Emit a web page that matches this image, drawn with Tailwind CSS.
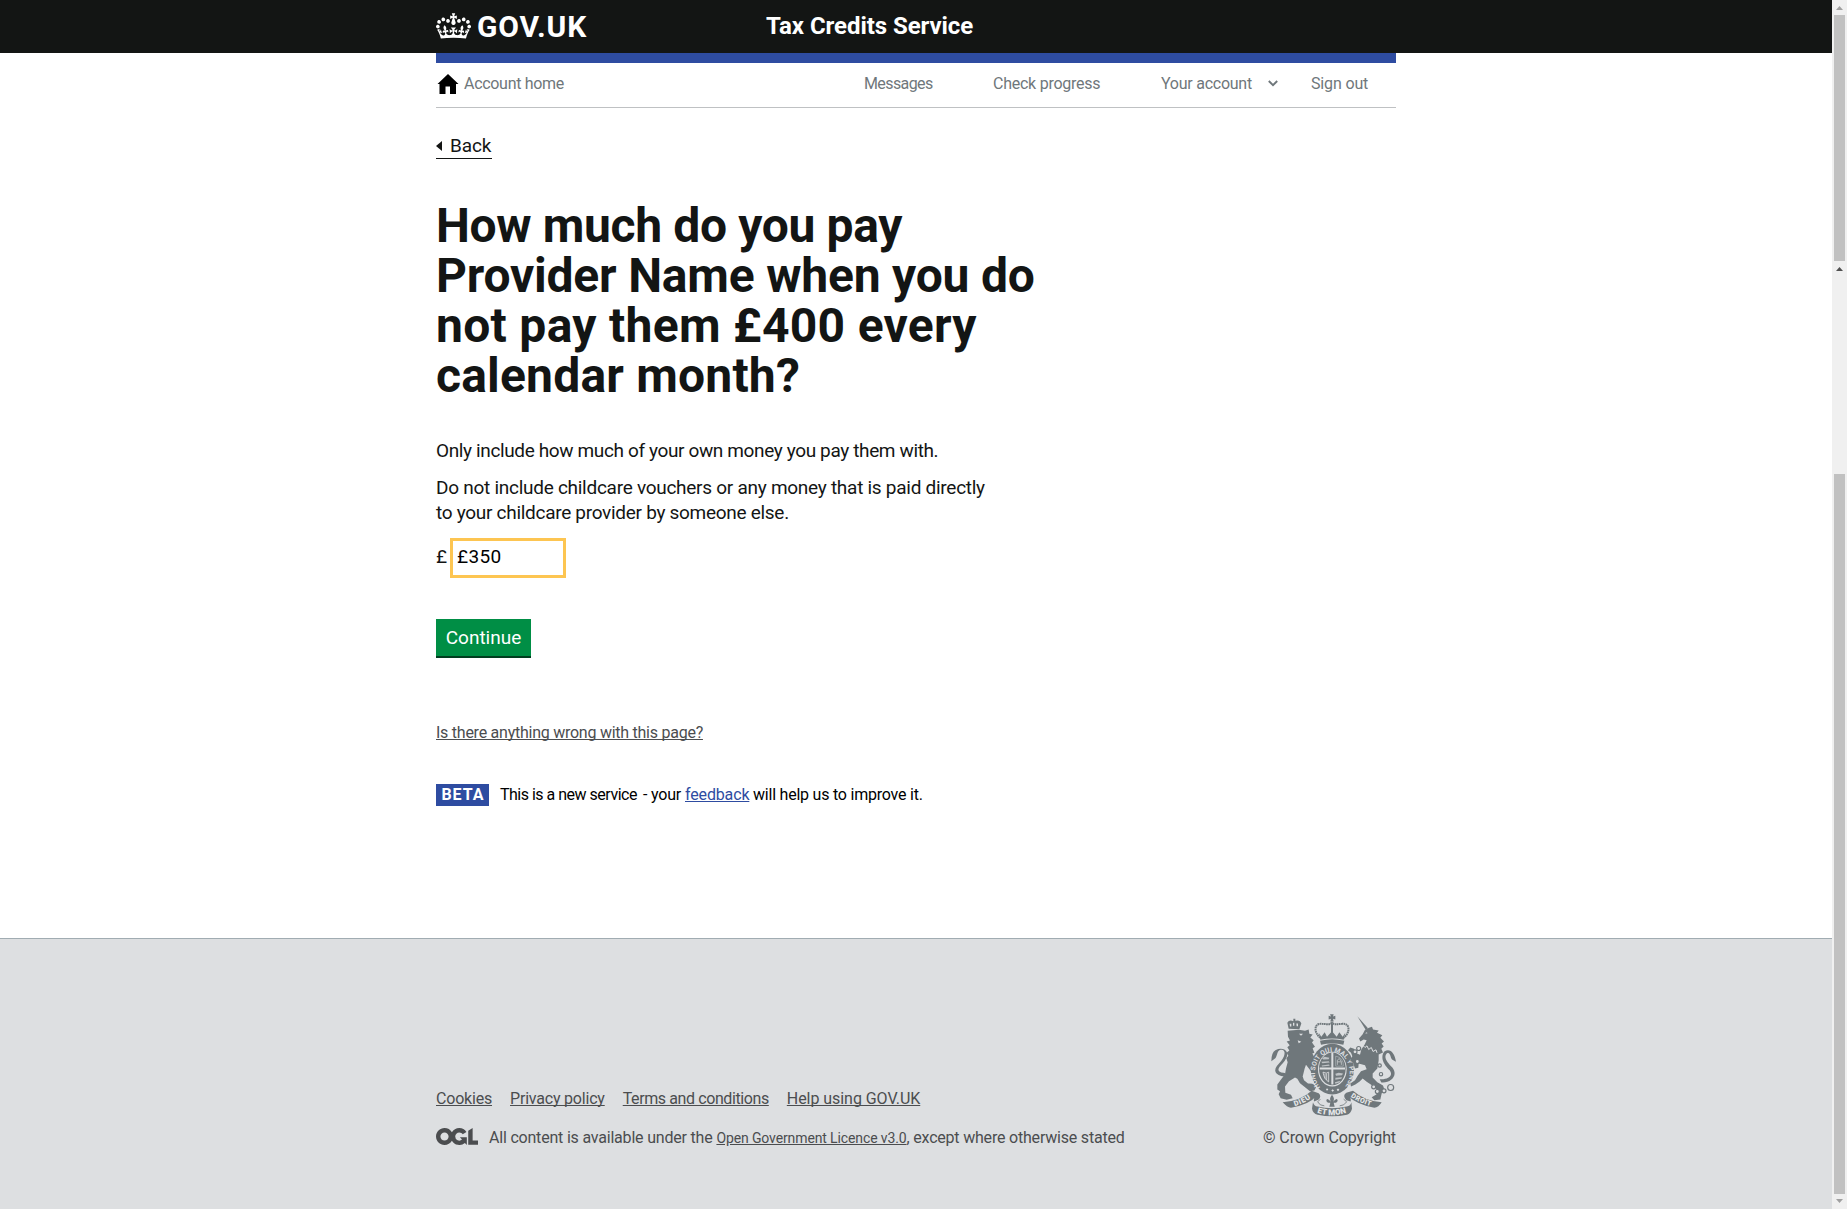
<!DOCTYPE html>
<html lang="en">
<head>
<meta charset="utf-8">
<title>Tax Credits Service</title>
<script src="https://cdn.jsdelivr.net/npm/@tailwindcss/browser@4"></script>
</head>
<body class="flex h-[1209px] overflow-hidden bg-white font-[Roboto,Arial,sans-serif] text-[#131514]">
<div class="flex w-[1832px] flex-col">
  <header class="h-[53px] bg-[#131514] text-white">
    <div class="mx-auto flex h-[53px] w-[960px] items-center">
      <svg class="-mt-[2px] h-[26px] w-[35px]" viewBox="0 0 132 97" fill="#fff"><path d="M25 30.2c3.5 1.5 7.7-.2 9.1-3.7 1.5-3.6-.2-7.8-3.9-9.2-3.6-1.4-7.6.3-9.1 3.9-1.4 3.5.3 7.5 3.9 9zM9 39.5c3.6 1.5 7.8-.2 9.2-3.7 1.5-3.6-.2-7.8-3.9-9.1-3.6-1.5-7.6.2-9.1 3.8-1.4 3.5.3 7.5 3.8 9zM4.4 57.2c3.5 1.5 7.7-.2 9.1-3.8 1.5-3.6-.2-7.7-3.9-9.1-3.5-1.5-7.6.3-9.1 3.8-1.4 3.5.3 7.6 3.9 9.1zm38.3-21.4c3.5 1.5 7.7-.2 9.1-3.8 1.5-3.6-.2-7.7-3.9-9.1-3.6-1.5-7.6.3-9.1 3.8-1.3 3.6.4 7.7 3.9 9.1zm64.4-5.6c-3.6 1.5-7.8-.2-9.1-3.7-1.5-3.6.2-7.8 3.8-9.2 3.6-1.4 7.7.3 9.2 3.9 1.3 3.5-.4 7.5-3.9 9zm15.9 9.3c-3.6 1.5-7.7-.2-9.1-3.7-1.5-3.6.2-7.8 3.7-9.1 3.6-1.5 7.7.2 9.2 3.8 1.5 3.5-.3 7.5-3.8 9zm4.7 17.7c-3.6 1.5-7.8-.2-9.2-3.8-1.5-3.6.2-7.7 3.9-9.1 3.6-1.5 7.7.3 9.2 3.8 1.3 3.5-.4 7.6-3.9 9.1zM89.3 35.8c-3.6 1.5-7.8-.2-9.2-3.8-1.4-3.6.2-7.7 3.9-9.1 3.6-1.5 7.7.3 9.2 3.8 1.4 3.6-.3 7.7-3.9 9.1zM69.7 17.7l8.9 4.7V9.3l-8.9 2.8c-.2-.3-.5-.6-.9-.9L72.4 0H59.6l3.5 11.2c-.3.3-.6.5-.9.9l-8.8-2.8v13.1l8.8-4.7c.3.3.6.7.9.9l-5 15.4v.1c-.2.8-.4 1.6-.4 2.4 0 4.1 3.1 7.5 7 8.1h.2c.3 0 .7.1 1 .1.4 0 .7 0 1-.1h.2c4-.6 7.1-4.1 7.1-8.1 0-.8-.1-1.7-.4-2.4V34l-5.1-15.4c.4-.2.7-.6 1-.9zM66 92.8c16.9 0 32.8 1.1 47.1 3.2 4-16.9 8.9-26.7 14-33.5l-9.6-3.4c1 4.9 1.1 7.2 0 10.2-1.5-1.4-3-4.3-4.2-8.7L108.6 76c2.8-2 5-3.2 7.5-3.3-4.4 9.4-10 11.9-13.6 11.2-4.3-.8-6.3-4.6-5.6-7.9 1-4.7 5.7-5.9 8-.5 4.3-8.7-3-11.4-7.6-8.8 7.1-7.2 7.9-13.5 2.1-21.1-8 6.1-8.1 12.3-4.5 20.8-4.7-5.4-12.1-2.5-9.5 6.2 3.4-5.2 7.9-2 7.2 3.1-.6 4.3-6.4 7.8-13.5 7.2-10.3-.9-10.9-8-11.2-13.8 2.5-.5 7.1 1.8 11 7.3L80.2 60c-4.1 4.4-8 5.3-12.3 5.4 1.4-4.4 8-11.6 8-11.6H55.5s6.4 7.2 7.9 11.6c-4.2-.1-8-1-12.3-5.4l1.4 16.4c3.9-5.5 8.5-7.7 10.9-7.3-.3 5.8-.9 12.8-11.1 13.8-7.2.6-12.9-2.9-13.5-7.2-.7-5 3.8-8.3 7.1-3.1 2.7-8.7-4.6-11.6-9.4-6.2 3.7-8.5 3.6-14.7-4.6-20.8-5.8 7.6-5 13.9 2.2 21.1-4.7-2.6-11.9.1-7.7 8.8 2.3-5.5 7.1-4.2 8.1.5.7 3.3-1.3 7.1-5.7 7.9-3.5.7-9-1.8-13.5-11.2 2.5.1 4.7 1.3 7.5 3.3l-4.7-15.4c-1.2 4.4-2.7 7.2-4.3 8.7-1.1-3-.9-5.3 0-10.2l-9.5 3.4c5 6.9 9.9 16.7 14 33.5 14.8-2.1 30.8-3.2 47.7-3.2z"/></svg>
      <span class="ml-[6px] w-[289px] text-[30px] leading-[52px] font-bold tracking-[0.9px]">GOV.UK</span>
      <span class="pb-[2px] text-[24px] leading-[50px] font-bold tracking-[-0.06px]">Tax Credits Service</span>
    </div>
  </header>

  <main class="mx-auto w-[960px]">
    <div class="h-[10px] bg-[#2e4ca1]"></div>
    <nav class="flex h-[45px] items-center border-b border-[#bfc1c3] pr-[27px] pb-[2px] text-[16px] leading-[20px] text-[#6f777b]">
      <svg class="-mt-[1px] ml-[1px] h-[20px] w-[22px]" viewBox="0 0 21 20" fill="#000"><path d="M10.5 0 21 10H18.500V20H12.500V12.500H8V20H2V10H0Z"/></svg>
      <span class="ml-[5px] tracking-[-0.3px]">Account home</span>
      <span class="ml-auto w-[129px] tracking-[-0.6px]">Messages</span>
      <span class="w-[168px] tracking-[-0.25px]">Check progress</span>
      <span class="w-[107px] tracking-[-0.25px]">Your account</span>
      <svg class="-mt-[2px] mr-[33px] h-[7px] w-[10px]" viewBox="0 0 10 7" fill="none" stroke="#6f777b" stroke-width="1.9"><path d="M.8 1 5 5.200 9.200 1"/></svg>
      <span class="w-[58px] tracking-[-0.15px]">Sign out</span>
    </nav>

    <a class="mt-[25px] flex h-[26px] w-[56px] items-center border-b border-[#131514] text-[19px] leading-[25px]">
      <svg class="h-[10px] w-[6px]" viewBox="0 0 6 10" fill="#131514"><path d="M6 0V10L0 5Z"/></svg>
      <span class="ml-[8px] tracking-[-0.1px]">Back</span>
    </a>

    <h1 class="mt-[42px] text-[48px] leading-[50px] font-bold whitespace-nowrap">
      <span class="block tracking-[-0.35px]">How much do you pay</span>
      <span class="block tracking-[-0.2px]">Provider Name when you do</span>
      <span class="block tracking-[0.3px]">not pay them £400 every</span>
      <span class="block tracking-[0.2px]">calendar month?</span>
    </h1>

    <p class="mt-[37px] text-[19px] leading-[25px] tracking-[-0.37px]">Only include how much of your own money you pay them with.</p>
    <p class="mt-[12px] text-[19px] leading-[25px] tracking-[-0.27px] whitespace-nowrap">Do not include childcare vouchers or any money that is paid directly<br><span class="tracking-[-0.29px]">to your childcare provider by someone else.</span></p>

    <div class="mt-[13px] flex h-[40px] text-[19px]">
      <span class="w-[11px] leading-[37px]">£</span>
      <div class="ml-[3px] h-[40px] w-[116px] border-[3px] border-[#fdc551] pl-[4px] leading-[31px] tracking-[0.35px] text-black">£350</div>
    </div>

    <button class="mt-[41px] block h-[39px] w-[95px] border-b-2 border-[#003e1f] bg-[#008e45] text-center text-[19px] leading-[37px] text-white">Continue</button>

    <a class="mt-[65px] block text-[16px] leading-[20px] tracking-[-0.25px] text-[#4b4d4f] underline decoration-1 underline-offset-1 [text-decoration-skip-ink:none]">Is there anything wrong with this page?</a>

    <div class="mt-[41px] flex h-[22px] items-center text-[16px] leading-[20px] whitespace-pre text-black">
      <strong class="h-[22px] w-[53px] bg-[#2e4ca1] text-center indent-[1px] leading-[21px] tracking-[1px] text-white">BETA</strong>
      <span class="-mt-[1px] ml-[11px] w-[143px] tracking-[-0.5px]">This is a new service</span>
      <span class="-mt-[1px] w-[42px] tracking-[-0.2px]">- your</span>
      <a class="-mt-[1px] w-[68px] tracking-[-0.15px] text-[#2e4ca1] underline decoration-1 underline-offset-1">feedback</a>
      <span class="-mt-[1px] tracking-[-0.22px]">will help us to improve it.</span>
    </div>
  </main>

  <footer class="mt-[132px] h-[271px] border-t border-[#a1acb2] bg-[#dddfe1] text-[16px] leading-[20px] text-[#4b4d4f]">
    <div class="mx-auto flex w-[960px] items-end justify-between pt-[75px]">
      <div>
        <div class="flex [text-decoration-skip-ink:none]">
          <a class="mr-[18px] tracking-[-0.2px] underline underline-offset-1">Cookies</a>
          <a class="mr-[18px] tracking-[-0.2px] underline underline-offset-1">Privacy policy</a>
          <a class="mr-[18px] tracking-[-0.4px] underline underline-offset-1">Terms and conditions</a>
          <a class="tracking-[-0.05px] underline underline-offset-1">Help using GOV.UK</a>
        </div>
        <div class="mt-[19px] flex items-center whitespace-nowrap">
          <svg class="-mt-[3px] mr-[11px] h-[17px] w-[42px]" viewBox="0 0 483.2 195.7" fill="#4b4d4f"><path d="M421.5 142.8V.1l-50.7 32.3v161.1h112.4v-50.7zm-122.3-9.6A47.12 47.12 0 0 1 221 97.8c0-26 21.1-47.1 47.1-47.1 16.7 0 31.4 8.7 39.7 21.8l42.7-27.2A97.63 97.63 0 0 0 268.1 0c-36.500 0-68.300 20.100-85.100 49.700A98 98 0 0 0 97.800 0C43.900 0 0 43.900 0 97.800s43.900 97.800 97.800 97.800c36.500 0 68.300-20.100 85.100-49.700a97.760 97.760 0 0 0 149.600 25.400l19.400 22.200h3v-87.800h-80l24.300 27.500zM97.800 145c-26 0-47.100-21.100-47.100-47.100s21.100-47.100 47.100-47.100 47.100 21.100 47.100 47.100S123.800 145 97.800 145"/></svg>
          <span class="mr-[4px] tracking-[-0.2px]">All content is available under the</span>
          <a class="text-[14px] tracking-[-0.12px] underline underline-offset-1">Open Government Licence v3.0</a>
          <span class="tracking-[-0.2px]">, except where otherwise stated</span>
        </div>
      </div>
      <div class="flex w-[133px] flex-col items-end">
        <svg class="mb-[11px] h-[103px] w-[125px]" viewBox="63 42 375 308" fill="#6f777b" stroke="none">
          <defs>
            <path id="garter" d="M211 262A52 62 0 1 1 283 262"/>
            <path id="scrollL" d="M134 318 Q162 310 188 290"/>
            <path id="scrollM" d="M202 335Q246 350 293 333"/>
            <path id="scrollR" d="M302 290Q328 308 366 319"/>
          </defs>
          <!-- lion: crown, mane, body, legs and tail -->
          <path d="M116 86 112 68Q117 58 130 63L130 56 136 56 136 62Q150 58 154 70L148 87Z"/>
          <path d="M119 71h5v8h-4zM129 68h4v9h-4zM139 70h5v8h-4z" fill="#dddfe1"/>
          <path d="M113 92 147 89 165 92 176 88 178 101 188 103 181 112 191 120 186 127 195 140 188 144 193 158 187 160 197 178 192 208 188 204 183 213 168 194 164 205 158 229 162 240 174 250 190 251 198 262 193 271 180 273 166 262 150 249 142 236 135 232 117 243 105 259 106 278 123 284 128 294 110 299 92 294 86 282 90 273 82 268 82 253 93 238 105 222 108 205 113 186 109 174 115 167 110 158 118 151 112 141 119 135 110 124 120 121 114 110Z"/>
          <path d="M103 229C76 226 66 211 87 190 108 169 109 147 92 149 80 151 84 165 76 174L64 183Q64 157 76 150 91 143 103 148C121 158 108 180 94 194 77 211 87 218 107 219Z"/>
          <path d="M147 101h12l-6 6zM143 120l11 5-8 4z" fill="#dddfe1"/>
          <!-- royal crown -->
          <g fill="none" stroke="#6f777b" stroke-width="6">
            <path d="M211 113C190 96 192 68 216 71 233 72 244 75 246 65 248 75 260 72 276 71 300 68 302 96 281 113" stroke-dasharray="5 1.500"/>
            <path d="M246 70V112"/>
          </g>
          <path d="M240 42h11l-2 7 7-2v11l-7-2 2 8h-10l2-8-7 2V47l7 2z"/>
          <path d="M206 98 214 110 224 96 231 110 246 93 260 110 268 96 278 110 286 98 281 119Q246 111 211 119Z"/>
          <path d="M210 122Q246 113 283 122L280 134Q246 126 213 134Z"/>
          <!-- garter and quartered shield -->
          <ellipse cx="247" cy="207" rx="65" ry="76"/>
          <ellipse cx="247" cy="207" rx="43" ry="52" fill="#dddfe1"/>
          <ellipse cx="247" cy="206" rx="40" ry="49"/>
          <path d="M209 202h76v6h-76zM244 157h6v96h-6z" fill="#dddfe1"/>
          <path d="M216 174l8-4 14 3-2 4-16 1zM214 185l22-2 3 4-22 2zM215 196l22-3 2 4-23 2zM256 221l10-3 13 2-3 5-18 2zM256 233l20-2-2 5-18 3zM255 246l16-4-3 5-12 4z" fill="#bfc3c6"/>
          <path d="M257 168Q281 172 280 198L257 198Z" fill="none" stroke="#a4abae" stroke-width="2.500"/>
          <path d="M262 194V180l6-5 6 9v10M262 185h11" fill="none" stroke="#c4c8ca" stroke-width="2.500"/>
          <path d="M219 216Q230 222 236 216V245Q222 237 219 216M225 220V235M230 220V240" fill="none" stroke="#dddfe1" stroke-width="2.500"/>
          <g fill="#dddfe1" font-family="Roboto, sans-serif" font-weight="700">
            <text font-size="20" textLength="272"><textPath href="#garter">HONI SOIT QUI MAL Y PENSE</textPath></text>
          </g>
          <path d="M228 268l3-4 4 4-4 4zM244 271l4-4 4 4-4 4zM260 269l4-4 4 4-4 4z" fill="#dddfe1"/>
          <!-- unicorn: horn, head, collar, body and tail -->
          <path d="M322 48 354 84 347 89Z"/>
          <path d="M345 89 357 83 366 80 369 88 386 91 381 98 397 105 391 113 402 124 395 130 401 139 394 146 399 157 386 163 386 181 382 205 368 220 368 232 382 246 399 256 403 267 395 280 391 298 373 300 365 291 379 283 383 270 368 257 350 245 338 235 329 244 316 253 303 259 301 250 315 240 323 227 333 213 350 207 345 195 326 190 325 203 315 205 309 187 300 180 307 168 303 158 294 150 301 142 312 146 321 160 330 164 334 148 344 133 350 120 341 118 331 124 327 115 338 102Z"/>
          <path d="M345 99l6-3 1 4z" fill="#dddfe1"/>
          <path d="M337 134l8 8 6-5 5 11 8-6 5 12 9-5 3 9" fill="none" stroke="#dddfe1" stroke-width="3"/>
          <path d="M389 237C412 239 432 228 419 210 400 192 390 171 403 154 420 143 434 158 438 185L426 178C420 169 421 154 410 160 399 172 414 188 427 202 446 226 422 250 394 247Z"/>
          <g fill="#dddfe1" stroke="#6f777b" stroke-width="3.500">
            <circle cx="326" cy="145" r="6"/><circle cx="315" cy="155" r="6"/><circle cx="322" cy="184" r="6"/><circle cx="389" cy="196" r="5"/><circle cx="393" cy="222" r="5"/><circle cx="371" cy="260" r="6"/><circle cx="382" cy="274" r="6"/><circle cx="402" cy="272" r="6"/><circle cx="422" cy="262" r="9"/>
          </g>
          <!-- motto scroll -->
          <path d="M98 306Q150 304 185 272L206 279Q216 288 205 299L192 304Q190 294 197 290 178 313 123 323Q111 321 98 306Z"/>
          <path d="M395 306Q345 304 309 272L289 278Q276 287 289 300L302 304Q304 294 297 290 320 313 373 323Q386 321 395 306Z"/>
          <path d="M189 306Q192 318 203 319 246 329 290 319 302 317 304 306L306 326Q302 341 291 344 246 353 203 344 188 340 186 325Z"/>
          <path d="M246 284Q236 296 243 305 230 290 229 301 230 309 241 308L238 320H254L251 308Q262 309 263 301 262 290 249 305 256 296 246 284Z"/>
          <path d="M211 297l-8 8 8 9 12 3M281 297l9 8-9 9-12 3" fill="none" stroke="#6f777b" stroke-width="2.500"/>
          <g fill="#e6e8e9" font-family="Roboto, sans-serif" font-weight="900">
            <text font-size="22" textLength="54"><textPath href="#scrollL">DIEU</textPath></text>
            <text font-size="24" textLength="88" dy="3"><textPath href="#scrollM">ET MON</textPath></text>
            <text font-size="21" textLength="66"><textPath href="#scrollR">DROIT</textPath></text>
          </g>
        </svg>
        <span class="tracking-[-0.09px] whitespace-nowrap">© Crown Copyright</span>
      </div>
    </div>
  </footer>
</div>

<!-- nested scrollbars at the window edge -->
<div class="flex h-[1209px] w-[15px] flex-col items-center bg-[#f0f0f0]">
  <svg class="mt-[6px] h-[4px] w-[7px]" viewBox="0 0 7 4" fill="#a0a0a0"><path d="M3.500 0 7 4H0Z"/></svg>
  <div class="mt-[5px] h-[246px] w-[11px] bg-[#c1c1c1]"></div>
  <svg class="mt-[6px] h-[4px] w-[7px]" viewBox="0 0 7 4" fill="#505050"><path d="M3.500 0 7 4H0Z"/></svg>
  <div class="mt-[203px] h-[720px] w-[11px] bg-[#c1c1c1]"></div>
  <svg class="mt-[5px] h-[4px] w-[7px]" viewBox="0 0 7 4" fill="#a0a0a0"><path d="M0 0H7L3.500 4Z"/></svg>
</div>
</body>
</html>
